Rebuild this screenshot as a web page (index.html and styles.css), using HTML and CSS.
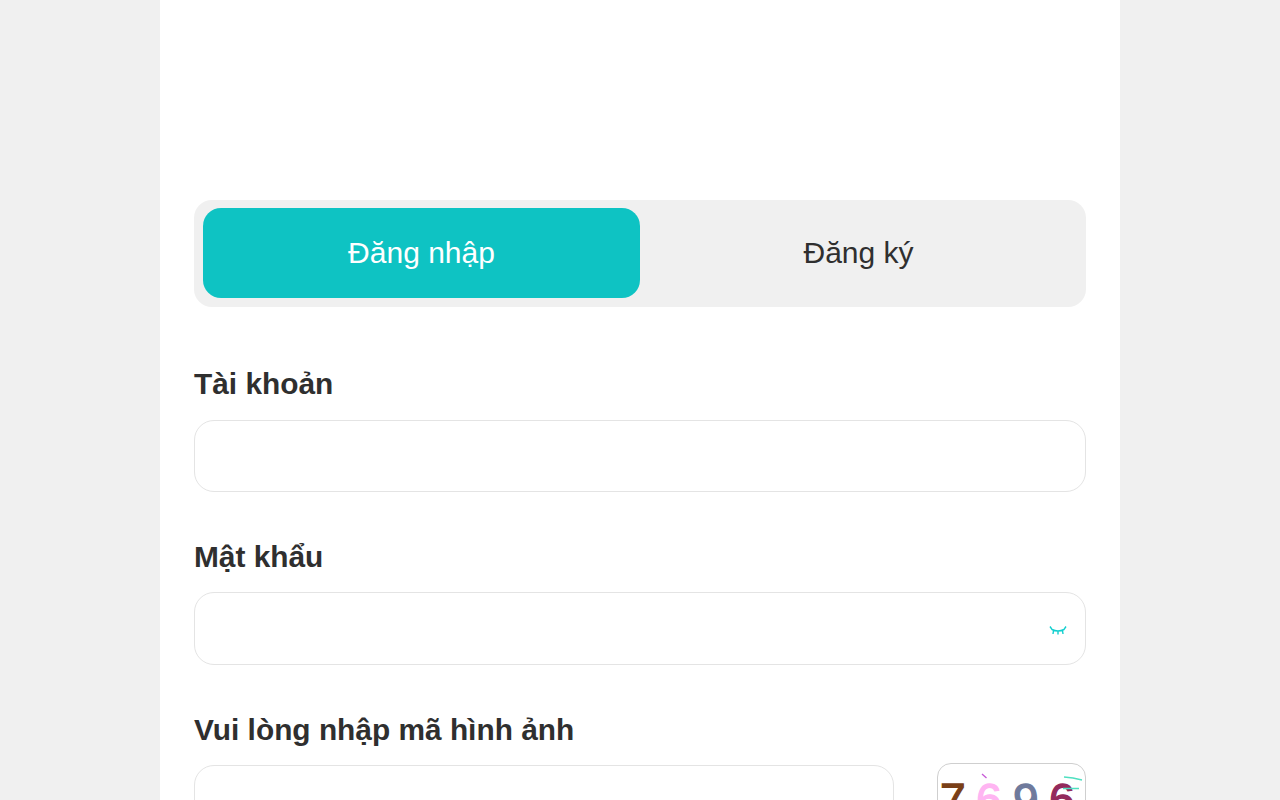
FILE: index.html
```html
<!DOCTYPE html>
<html lang="vi">
<head>
	<meta charset="UTF-8">
	<title>Đăng nhập</title>
	<link rel="stylesheet" href="styles.css">
</head>
<body>
	<div class="box">
		<div class="tabs">
			<div class="tab active">Đăng nhập</div>
			<div class="tab">Đăng ký</div>
		</div>
		<div class="group first">
			<div class="label">Tài khoản</div>
			<div class="field"></div>
		</div>
		<div class="group">
			<div class="label">Mật khẩu</div>
			<div class="field eye-field">
				<svg class="eye" viewBox="0 0 18 12" width="18" height="12">
					<path d="M1 2.5L3 5.5Q9 8.5 15 5.5L17 2.5M4.5 6.5L4 10M9 7.5V10.5M13.5 6.5L14 10" fill="none" stroke="#12cfcf" stroke-width="1.4"/>
				</svg>
			</div>
		</div>
		<div class="group">
			<div class="label">Vui lòng nhập mã hình ảnh</div>
			<div class="code-row">
				<div class="field"></div>
				<div class="captcha">
					<svg viewBox="0 0 149 72" width="149" height="72">
						<text class="num brown" x="3" y="53">7</text>
						<text class="num pink" x="39" y="53">6</text>
						<text class="num slate" x="76" y="53">9</text>
						<text class="num wine" x="112" y="53">6</text>
						<path d="M45 11l4.500 4" stroke="#c65ad6" stroke-width="1.300"/>
						<path d="M127 14l9 1 9 2M126 25.500h16" fill="none" stroke="#4fe0c0" stroke-width="1.500"/>
					</svg>
				</div>
			</div>
		</div>
	</div>
</body>
</html>
```

FILE: styles.css
```css
html{
	overflow: hidden;
}
body{
	margin: 0;
	background-color: #f0f0f0;
	font-family: "Liberation Sans", Arial, sans-serif;
	color: #2f2f2f;
}
.box{
	width: 960px;
	height: 1000px;
	margin: 0 auto;
	padding: 200px 34px 0;
	box-sizing: border-box;
	background-color: #fff;
}
.tabs{
	display: flex;
	height: 107px;
	padding: 8px 9px 9px;
	box-sizing: border-box;
	background-color: #f0f0f0;
	border-radius: 18px;
}
.tab{
	flex: 1;
	line-height: 90px;
	text-align: center;
	font-size: 30px;
	border-radius: 18px;
}
.tab.active{
	background-color: #0ec3c3;
	color: #fff;
}
.group{
	margin-top: 47px;
}
.group.first{
	margin-top: 59px;
}
.label{
	height: 36px;
	line-height: 36px;
	margin-bottom: 17px;
	font-size: 29.85px;
	font-weight: 700;
}
.first .label{
	margin-bottom: 18px;
}
.field{
	height: 72px;
	box-sizing: border-box;
	border: 1px solid #e4e4e4;
	border-radius: 20px;
	background-color: #fff;
}
.eye-field{
	display: flex;
	align-items: center;
	justify-content: flex-end;
	height: 73px;
	padding: 2px 18px 0 0;
}
.eye{
	display: block;
}
.code-row{
	display: grid;
	grid-template-columns: 700px 149px;
	justify-content: space-between;
	align-items: start;
}
.captcha{
	height: 72px;
	margin-top: -2px;
	box-sizing: border-box;
	overflow: hidden;
	border: 1px solid #cfcfcf;
	border-radius: 14px;
}
.captcha svg{
	display: block;
	margin: -1px;
}
.num{
	font-family: "Liberation Sans", Arial, sans-serif;
	font-size: 46px;
	stroke-width: 1.3px;
}
.brown{
	fill: #7a3f17;
	stroke: #7a3f17;
}
.pink{
	fill: #ffb5f2;
	stroke: #ffb5f2;
}
.slate{
	fill: #6f7a9c;
	stroke: #6f7a9c;
}
.wine{
	fill: #932a5c;
	stroke: #932a5c;
}
```
